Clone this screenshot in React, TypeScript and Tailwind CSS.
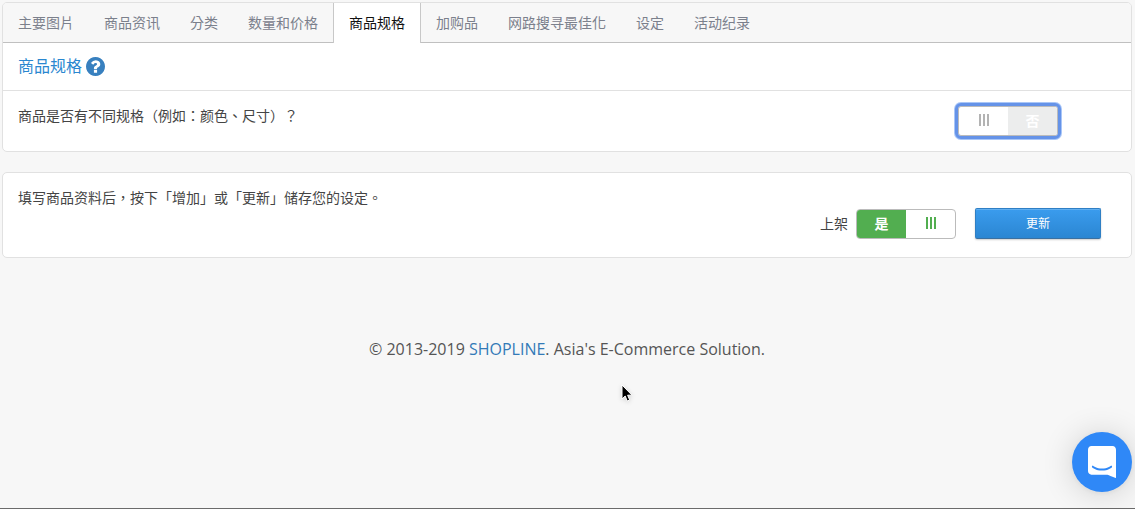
import { useState } from "react"

const tabs = [
  "主要图片",
  "商品资讯",
  "分类",
  "数量和价格",
  "商品规格",
  "加购品",
  "网路搜寻最佳化",
  "设定",
  "活动纪录",
]

export default function App(){
  const [activeTab, setActiveTab] = useState("商品规格")
  const [hasVariations, setHasVariations] = useState(false)
  const [published, setPublished] = useState(true)

  return (
    <div className="relative flex flex-col min-h-screen bg-[#f7f7f7] border-b border-[#6b6b6b] pt-0.5 pl-0.5 pr-[3px] text-sm leading-5 text-[#444] font-['Open_Sans','Noto_Sans_CJK_TC',sans-serif]">
      <section className="border border-[#e1e1e1] rounded-[5px] bg-white overflow-hidden">
        <nav className="flex h-10 bg-[#f7f7f7]" role="tablist">
          {
            tabs.map(tab => (
              <button
                key={tab}
                type="button"
                role="tab"
                aria-selected={tab === activeTab}
                onClick={() => setActiveTab(tab)}
                className={tab === activeTab
                  ? "px-[15px] whitespace-nowrap border-x border-[#c8c8c8] bg-white text-[#111]"
                  : "px-[15px] whitespace-nowrap border-b border-[#c0c0c0] text-[#7b808c]"}
              >
                {tab}
              </button>
            ))
          }
          <div className="grow border-b border-[#c0c0c0]"></div>
        </nav>
        <header className="flex items-center gap-1 h-12 px-[15px] pb-px border-b border-[#e1e1e1]">
          <h2 className="text-base text-[#2a87d0]">商品规格</h2>
          <HelpIcon />
        </header>
        <div className="flex justify-between h-[60px] pl-[15px] pr-[73px]">
          <p className="pt-[15px]">商品是否有不同规格（例如：颜色、尺寸）？</p>
          <div className="pt-[15px]">
            <Toggle label="商品是否有不同规格" checked={hasVariations} onChange={setHasVariations} focused />
          </div>
        </div>
      </section>

      <section className="mt-5 border border-[#e1e1e1] rounded-[5px] bg-white pt-[15px] pb-[18px] pl-[15px] pr-[30px]">
        <p>填写商品资料后，按下「增加」或「更新」储存您的设定。</p>
        <div className="flex items-center justify-end">
          <span className="mr-2">上架</span>
          <Toggle label="上架" checked={published} onChange={setPublished} />
          <button
            type="button"
            className="ml-[19px] w-[126px] h-[31px] rounded-xs border border-[#2f7fc4] border-b-[#3b70a0] bg-linear-to-b from-[#3a9cee] to-[#2b86d2] text-xs text-white shadow-[0_1px_2px_rgba(0,0,0,0.2),inset_0_1px_0_rgba(255,255,255,0.2)]"
          >
            更新
          </button>
        </div>
      </section>

      <footer className="pt-[79px] text-center text-base text-[#555]">
        © 2013-2019 <a href="#" className="text-[#337ab7]">SHOPLINE</a>. Asia's E-Commerce Solution.
      </footer>

      <Cursor />
      <ChatLauncher />
    </div>
  )
}

function Toggle({label, checked, onChange, focused}: {
  label: string
  checked: boolean
  onChange: (value: boolean) => void
  focused?: boolean
}){
  return (
    <label
      className={focused
        ? "relative flex w-[100px] h-[30px] rounded-[3px] border border-[#bbb] bg-white overflow-hidden font-bold cursor-pointer outline-3 outline-[#6593e8] shadow-[0_0_0_4px_#a9c6f7]"
        : "relative flex w-[100px] h-[30px] rounded-[4px] border border-[#bbb] bg-white overflow-hidden font-bold cursor-pointer"}
    >
      <input
        type="checkbox"
        className="sr-only"
        aria-label={label}
        checked={checked}
        onChange={e => onChange(e.target.checked)}
      />
      {
        checked ? (
          <>
            <span className="flex flex-1 items-center justify-center bg-[#52ae50] text-white">是</span>
            <Grip className="border-[#52ae50]" />
          </>
        ):(
          <>
            <Grip className="border-[#b3b3b3]" />
            <span className="flex flex-1 items-center justify-center bg-[#eceded] text-white">否</span>
          </>
        )
      }
    </label>
  )
}

function Grip({className}: {
  className: string
}){
  return (
    <span className="flex flex-1 items-center justify-center gap-0.5 pb-0.5">
      <i className={`h-3 border-l-2 ${className}`}></i>
      <i className={`h-3 border-l-2 ${className}`}></i>
      <i className={`h-3 border-l-2 ${className}`}></i>
    </span>
  )
}

function HelpIcon(){
  return (
    <svg width="19" height="19" viewBox="0 0 1536 1536" aria-hidden="true">
      <path fill="#3880bf" d="M896 1248v-192q0-14-9-23t-23-9H672q-14 0-23 9t-9 23v192q0 14 9 23t23 9h192q14 0 23-9t9-23zm256-672q0-88-55.500-163T958 297t-170-41q-243 0-371 213-15 24 8 42l132 100q7 6 19 6 16 0 25-12 53-68 86-92 34-24 86-24 48 0 85.500 26t37.500 59q0 38-20 61t-68 45q-63 28-115.500 86.500T640 892v36q0 14 9 23t23 9h192q14 0 23-9t9-23q0-19 21.500-49.500T972 829q32-18 49-28.500t46-35 44.500-48 28-60.500 12.500-81zm384 192q0 209-103 385.500T1153.500 1433 768 1536t-385.500-103T103 1153.500 0 768t103-385.500T382.500 103 768 0t385.500 103T1433 382.500 1536 768z" />
    </svg>
  )
}

function Cursor(){
  return (
    <svg className="absolute left-[621px] top-[384px] drop-shadow-sm pointer-events-none" width="12" height="18" viewBox="0 0 12 18" aria-hidden="true">
      <path d="M1 1v14l3.200-3 2 5 2.500-1-2.100-4.800H11z" fill="#000" stroke="#fff" strokeWidth="1" />
    </svg>
  )
}

function ChatLauncher(){
  return (
    <button
      type="button"
      aria-label="Chat"
      className="fixed right-[3px] bottom-[17px] flex items-center justify-center size-[60px] rounded-full bg-[#2f88f7] shadow-[0_1px_6px_rgba(0,0,0,0.06),0_2px_32px_rgba(0,0,0,0.16)]"
    >
      <svg width="28" height="32" viewBox="0 0 28 32" aria-hidden="true">
        <path fill="#fff" d="M28 32s-4.714-1.855-8.527-3.340H3.437C1.540 28.660 0 27.026 0 25.013V3.644C0 1.633 1.540 0 3.437 0h21.125c1.898 0 3.437 1.632 3.437 3.645v18.404H28V32zm-4.139-11.982a.88.880 0 0 0-1.292-.105c-.030.026-3.015 2.681-8.570 2.681-5.486 0-8.517-2.636-8.571-2.684a.88.880 0 0 0-1.290.107 1.010 1.010 0 0 0-.219.708.992.992 0 0 0 .318.664c.142.128 3.537 3.150 9.762 3.150 6.226 0 9.621-3.022 9.763-3.150a.992.992 0 0 0 .317-.664 1.010 1.010 0 0 0-.218-.707z" />
      </svg>
    </button>
  )
}
